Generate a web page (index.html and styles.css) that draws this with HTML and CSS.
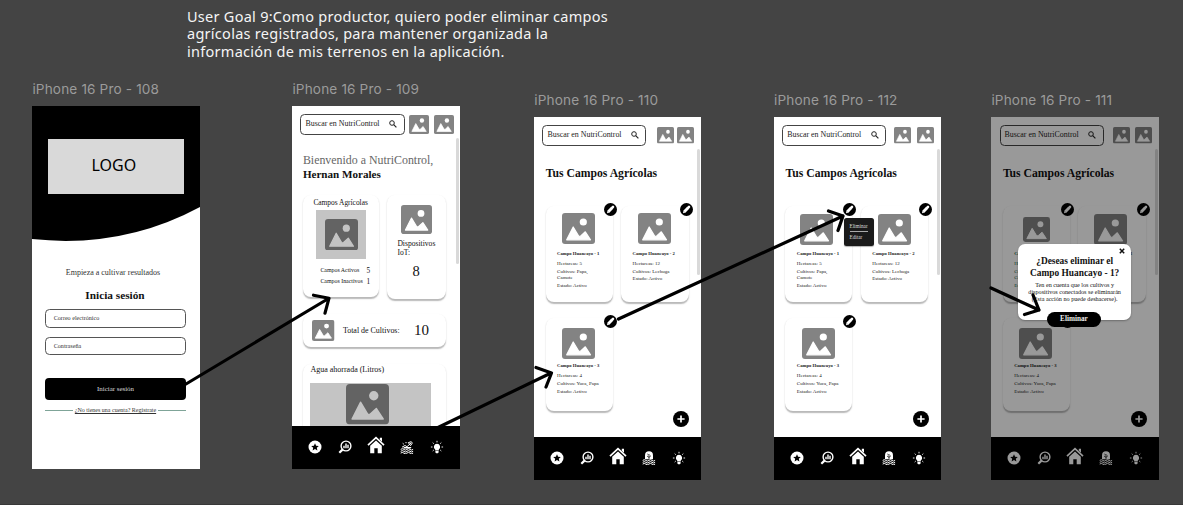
FILE: index.html
```html
<!DOCTYPE html>
<html lang="es">
<head>
<meta charset="utf-8">
<title>User Goal 9</title>
<link rel="stylesheet" href="styles.css">
</head>
<body>
<svg class="sprite" aria-hidden="true">
  <symbol id="pic" viewBox="0 0 33 31" preserveAspectRatio="none">
    <rect width="33" height="31" rx="3" fill="currentColor"/>
    <circle class="cut" cx="21.3" cy="9" r="3.6"/>
    <path class="cut cut-line" d="M4.7 26.8 11.2 14l5.6 9.4 1.7-.2 4.8-4.4 5.2 8z"/>
  </symbol>
  <symbol id="search" viewBox="0 0 8 8">
    <circle cx="3" cy="3" r="2.3" fill="none" stroke="#222" stroke-width="1"/>
    <path d="M4.7 4.7 7.4 7.4" stroke="#222" stroke-width="1.2"/>
  </symbol>
  <symbol id="star" viewBox="0 0 14 14">
    <circle cx="7" cy="7" r="6.5" fill="#fff"/>
    <path d="m7 3.3 1.1 2.4 2.7.3-2 1.8.6 2.7L7 9.1l-2.4 1.4.6-2.7-2-1.8 2.7-.3z" fill="#000"/>
  </symbol>
  <symbol id="stats" viewBox="0 0 14 14">
    <circle cx="8" cy="6" r="4.9" fill="none" stroke="#fff" stroke-width="1.4"/>
    <path d="M4.5 9.6 1.3 12.7" stroke="#fff" stroke-width="2.2"/>
    <path d="M6 8.2V5.7M8 8.2V3.5M10 8.2V4.7" stroke="#fff" stroke-width="1.4"/>
  </symbol>
  <symbol id="home" viewBox="0 0 18 18">
    <path d="M1 9.2 9 1.6l8 7.6" fill="none" stroke="#fff" stroke-width="1.7"/>
    <path d="M12.8 1.8H15v4l-2.200-2zM3.200 9.800 9 4.600l5.800 5.200v7.400h-4.100v-5H7.300v5H3.200z" fill="#fff"/>
  </symbol>
  <symbol id="crop" viewBox="0 0 14 14">
    <path d="M2 7.2 5 5.5l2 1.2L11 3M8.3 2.6l3-.9 1 1.4-1.8 2.6zM2.7 3.3l1.2 1M6 2v1.2" fill="none" stroke="#fff" stroke-width="1"/>
    <path d="M4 6.9h7.5l-1 1.6H3z" fill="#fff"/>
    <path d="M.7 9.4q1.6-1.4 3.1 0t3.1 0 3.1 0 3.1 0M.7 11.3q1.6-1.4 3.1 0t3.1 0 3.1 0 3.1 0M.7 13.1q1.6-1.4 3.1 0t3.1 0 3.1 0 3.1 0" fill="none" stroke="#fff" stroke-width="1"/>
  </symbol>
  <symbol id="field" viewBox="0 0 14 14">
    <path d="M3 8.300V4.200a4 4 0 0 1 8 0v4.100z" fill="#fff"/>
    <path d="M7 8V3M5 5l2 1.4L9 4.6M5.3 3l1.2.6" fill="none" stroke="#000" stroke-width=".7"/>
    <path d="M.7 9.4q1.6-1.4 3.1 0t3.1 0 3.1 0 3.1 0M.7 11.3q1.6-1.4 3.1 0t3.1 0 3.1 0 3.1 0M.7 13.1q1.6-1.4 3.1 0t3.1 0 3.1 0 3.1 0" fill="none" stroke="#fff" stroke-width="1"/>
  </symbol>
  <symbol id="bulb" viewBox="0 0 14 14">
    <path d="M7 3.700a3.200 3.200 0 0 1 1.800 5.800v1H5.200v-1A3.200 3.200 0 0 1 7 3.700zM5.400 11h3.200v1.400l-.8.8H6.200l-.8-.8z" fill="#fff"/>
    <path d="M7 .8v1.6M2.7 2.6l1.1 1.1M11.3 2.6l-1.1 1.1M.9 7h1.6M13.1 7h-1.6M2.7 11l1.1-1M11.3 11l-1.1-1" stroke="#fff" stroke-width=".9"/>
  </symbol>
  <symbol id="edit" viewBox="0 0 13 13">
    <circle cx="6.5" cy="6.5" r="6.5" fill="#000"/>
    <path d="m4.3 8.8 3.9-4.1" stroke="#fff" stroke-width="2.9"/>
    <path d="m3 10.2.5-2.4 1.9 1.8z" fill="#fff"/>
    <path d="m8.3 4.6.7-.7" stroke="#fff" stroke-width="2.6" stroke-linecap="round"/>
  </symbol>
  <symbol id="plus" viewBox="0 0 16 16">
    <circle cx="8" cy="8" r="8" fill="#000"/>
    <path d="M8 4.4v7.2M4.4 8h7.2" stroke="#fff" stroke-width="1.7"/>
  </symbol>
</svg>

<main class="canvas">
  <p class="goal">User Goal 9:Como productor, quiero poder eliminar campos<br>agrícolas registrados, para mantener organizada la<br>información de mis terrenos en la aplicación.</p>

  <section class="board board-108">
    <h2 class="label">iPhone 16 Pro - 108</h2>
    <div class="phone login">
      <header class="hero">
        <svg class="hero-shape" viewBox="0 0 167 135" preserveAspectRatio="none"><path d="M0 0H167V101Q90 143 0 133z"/></svg>
        <div class="logo">LOGO</div>
      </header>
      <p class="tagline">Empieza a cultivar resultados</p>
      <h3 class="login-title">Inicia sesión</h3>
      <div class="input">Correo electrónico</div>
      <div class="input">Contraseña</div>
      <div class="submit">Iniciar sesión</div>
      <div class="signup"><i></i><a>¿No tienes una cuenta? Regístrate</a><i></i></div>
    </div>
  </section>

  <section class="board board-109">
    <h2 class="label">iPhone 16 Pro - 109</h2>
    <div class="phone">
      <header class="topbar">
        <div class="search"><span>Buscar en NutriControl</span><svg><use href="#search"/></svg></div>
        <svg class="avatar"><use href="#pic"/></svg><svg class="avatar"><use href="#pic"/></svg>
      </header>
      <div class="home">
        <p class="welcome">Bienvenido a NutriControl,</p>
        <p class="name">Hernan Morales</p>
        <div class="panels">
          <article class="card fields">
            <h4>Campos Agrícolas</h4>
            <div class="thumb"><svg><use href="#pic"/></svg></div>
            <dl><dt>Campos Activos</dt><dd>5</dd><dt>Campos Inactivos</dt><dd>1</dd></dl>
          </article>
          <article class="card devices">
            <svg><use href="#pic"/></svg>
            <p>Dispositivos<br>IoT:</p>
            <strong>8</strong>
          </article>
          <article class="card total">
            <svg><use href="#pic"/></svg><p>Total de Cultivos:</p><strong>10</strong>
          </article>
          <article class="card water">
            <p>Agua ahorrada (Litros)</p>
            <div class="thumb"><svg><use href="#pic"/></svg></div>
          </article>
        </div>
      </div>
      <span class="scroll"></span>
      <nav class="nav"><svg><use href="#star"/></svg><svg><use href="#stats"/></svg><svg class="big"><use href="#home"/></svg><svg><use href="#crop"/></svg><svg><use href="#bulb"/></svg></nav>
    </div>
  </section>

  <section class="board board-110">
    <h2 class="label">iPhone 16 Pro - 110</h2>
    <div class="phone">
      <header class="topbar">
        <div class="search"><span>Buscar en NutriControl</span><svg><use href="#search"/></svg></div>
        <svg class="avatar"><use href="#pic"/></svg><svg class="avatar"><use href="#pic"/></svg>
      </header>
      <h3 class="title">Tus Campos Agrícolas</h3>
      <div class="plots">
        <article class="card plot one"><div class="pic"><svg><use href="#pic"/></svg></div><h4>Campo Huancayo - 1</h4><p>Hectareas: 5</p><p>Cultivos: Papa,<br>Camote</p><p class="state">Estado: Activo</p><svg class="edit"><use href="#edit"/></svg></article>
        <article class="card plot two"><div class="pic"><svg><use href="#pic"/></svg></div><h4>Campo Huancayo - 2</h4><p>Hectareas: 12</p><p>Cultivos: Lechuga</p><p>Estado: Activo</p><svg class="edit"><use href="#edit"/></svg></article>
        <article class="card plot three"><div class="pic"><svg><use href="#pic"/></svg></div><h4>Campo Huancayo - 3</h4><p>Hectareas: 4</p><p>Cultivos: Yuca, Papa</p><p class="state">Estado: Activo</p><svg class="edit"><use href="#edit"/></svg></article>
      </div>
      <svg class="fab"><use href="#plus"/></svg>
      <span class="scroll"></span>
      <nav class="nav"><svg><use href="#star"/></svg><svg><use href="#stats"/></svg><svg class="big"><use href="#home"/></svg><svg><use href="#field"/></svg><svg><use href="#bulb"/></svg></nav>
    </div>
  </section>

  <section class="board board-112">
    <h2 class="label">iPhone 16 Pro - 112</h2>
    <div class="phone">
      <header class="topbar">
        <div class="search"><span>Buscar en NutriControl</span><svg><use href="#search"/></svg></div>
        <svg class="avatar"><use href="#pic"/></svg><svg class="avatar"><use href="#pic"/></svg>
      </header>
      <h3 class="title">Tus Campos Agrícolas</h3>
      <div class="plots">
        <article class="card plot one"><div class="pic"><svg><use href="#pic"/></svg></div><h4>Campo Huancayo - 1</h4><p>Hectareas: 5</p><p>Cultivos: Papa,<br>Camote</p><p class="state">Estado: Activo</p><svg class="edit"><use href="#edit"/></svg></article>
        <article class="card plot two"><div class="pic"><svg><use href="#pic"/></svg></div><h4>Campo Huancayo - 2</h4><p>Hectareas: 12</p><p>Cultivos: Lechuga</p><p>Estado: Activo</p><svg class="edit"><use href="#edit"/></svg></article>
        <article class="card plot three"><div class="pic"><svg><use href="#pic"/></svg></div><h4>Campo Huancayo - 3</h4><p>Hectareas: 4</p><p>Cultivos: Yuca, Papa</p><p class="state">Estado: Activo</p><svg class="edit"><use href="#edit"/></svg></article>
      </div>
      <div class="menu"><span>Eliminar</span><hr><span>Editar</span></div>
      <svg class="fab"><use href="#plus"/></svg>
      <span class="scroll"></span>
      <nav class="nav"><svg><use href="#star"/></svg><svg><use href="#stats"/></svg><svg class="big"><use href="#home"/></svg><svg><use href="#field"/></svg><svg><use href="#bulb"/></svg></nav>
    </div>
  </section>

  <section class="board board-111">
    <h2 class="label">iPhone 16 Pro - 111</h2>
    <div class="phone">
      <header class="topbar">
        <div class="search"><span>Buscar en NutriControl</span><svg><use href="#search"/></svg></div>
        <svg class="avatar"><use href="#pic"/></svg><svg class="avatar"><use href="#pic"/></svg>
      </header>
      <h3 class="title">Tus Campos Agrícolas</h3>
      <div class="plots">
        <article class="card plot one"><div class="pic"><svg><use href="#pic"/></svg></div><h4>Campo Huancayo - 1</h4><p>Hectareas: 5</p><p>Cultivos: Papa,<br>Camote</p><p class="state">Estado: Activo</p><svg class="edit"><use href="#edit"/></svg></article>
        <article class="card plot two"><div class="pic"><svg><use href="#pic"/></svg></div><h4>Campo Huancayo - 2</h4><p>Hectareas: 12</p><p>Cultivos: Lechuga</p><p>Estado: Activo</p><svg class="edit"><use href="#edit"/></svg></article>
        <article class="card plot three"><div class="pic"><svg><use href="#pic"/></svg></div><h4>Campo Huancayo - 3</h4><p>Hectareas: 4</p><p>Cultivos: Yuca, Papa</p><p class="state">Estado: Activo</p><svg class="edit"><use href="#edit"/></svg></article>
      </div>
      <svg class="fab"><use href="#plus"/></svg>
      <span class="scroll"></span>
      <nav class="nav"><svg><use href="#star"/></svg><svg><use href="#stats"/></svg><svg class="big"><use href="#home"/></svg><svg><use href="#field"/></svg><svg><use href="#bulb"/></svg></nav>
      <div class="overlay"></div>
      <div class="modal">
        <svg class="close" viewBox="0 0 6 6"><path d="m.8.8 4.4 4.4M5.2.8.8 5.2"/></svg>
        <h4>¿Deseas eliminar el<br>Campo Huancayo - 1?</h4>
        <p>Ten en cuenta que los cultivos y<br>dispositivos conectados se eliminarán<br>(Esta acción no puede deshacerse).</p>
        <div class="confirm">Eliminar</div>
      </div>
    </div>
  </section>

  <svg class="arrows" viewBox="0 0 1183 505">
    <path d="M186 384 328.5 298.5M313.5 295.2l15.5 3-4 15"/>
    <path d="M438 427.500 551 373M536 367.500l15.500 5.500-5.500 14"/>
    <path d="M618.500 319 843 216M828.500 211l14.500 5-5 14.500"/>
    <path d="M991 288 1039 310M1033 295l6 15-14.500 4.500"/>
  </svg>
</main>
</body>
</html>
```

FILE: styles.css
```css
* { box-sizing: border-box; margin: 0; padding: 0; }
body { width: 1183px; height: 505px; overflow: hidden; background: #444; font-family: "Liberation Serif", serif; }
svg { display: block; flex: none; }
.sprite { position: absolute; width: 0; height: 0; }
.cut { fill: #fff; }
.cut-line { stroke: #fff; stroke-width: 1.2; stroke-linejoin: round; }
.canvas { position: relative; height: 505px; border-bottom: 1px solid #383838; }
.goal { position: absolute; left: 187px; top: 7.500px; white-space: nowrap; font: 14.5px/17.8px "Noto Sans", sans-serif; letter-spacing: .27px; color: #f5f5f5; }

/* artboards on the canvas */
.board { position: absolute; top: 92.3px; width: 167.2px; }
.board-108 { left: 32.4px; top: 81.4px; }
.board-109 { left: 292.4px; top: 81.4px; }
.board-110 { left: 534.3px; }
.board-112 { left: 774px; }
.board-111 { left: 991.4px; }
.label { height: 25px; font: 400 13.6px/16px Inter, sans-serif; letter-spacing: .15px; color: #9b9b9b; white-space: nowrap; }
.phone { position: relative; display: flex; flex-direction: column; height: 362.8px; background: #fff; overflow: hidden; color: #111; white-space: nowrap; }

/* login */
.login { align-items: center; }
.hero { position: relative; width: 100%; height: 135px; padding: 32.5px 0 0 15.5px; }
.hero-shape { position: absolute; left: -1px; top: 0; width: 169px; height: 135px; }
.logo { position: relative; width: 136px; height: 55px; padding-right: 4px; background: #d9d9d9; text-align: center; font: 16px/53px "Noto Sans", sans-serif; color: #000; }
.tagline { margin-top: 27px; margin-right: 6px; font-size: 8px; line-height: 10px; color: #333; }
.login-title { margin: 10px 2px 7px 0; font-size: 11.300px; line-height: 14px; }
.input { width: 140.500px; height: 18.500px; margin: 0 1px 9px 0; padding-left: 7.500px; border: 1px solid #555; border-radius: 4.500px; font-size: 6.100px; line-height: 16.500px; color: #333; }
.submit { width: 140.500px; height: 21.500px; margin: 14px 1px 0 0; border-radius: 4px; background: #000; color: #ddd; text-align: center; font-size: 6.900px; line-height: 21px; }
.signup { display: flex; align-items: center; justify-content: space-between; width: 140.500px; margin: 6px 1px 0 0; font-size: 6px; line-height: 9px; color: #333; }
.signup a { text-decoration: underline; }
.signup i { width: 28px; height: 1px; background: #7fa498; }

/* shared phone parts */
.topbar { display: flex; align-items: center; padding: 7.800px 0 0 8.200px; }
.search { display: flex; align-items: center; justify-content: space-between; width: 104px; height: 20.500px; padding: 0 6.500px 0 4px; border: 1px solid #444; border-radius: 4.500px; font-size: 7.900px; line-height: 10px; color: #222; }
.search svg { width: 8px; height: 8px; }
.avatar { width: 17px; height: 16.500px; margin-left: 11px; color: #838383; }
.avatar + .avatar { margin-left: 3px; }
.board-112 .avatar { margin-left: 8px; }
.board-112 .avatar + .avatar { margin-left: 6px; }
.board-111 .avatar { margin-left: 9.500px; }
.board-111 .avatar + .avatar { margin-left: 5px; }
.board-109 .topbar { padding-left: 7.600px; }
.board-109 .search { width: 105px; padding-left: 4.500px; }
.board-109 .avatar { width: 20px; height: 19px; margin-left: 4px; }
.board-109 .avatar + .avatar { margin-left: 5px; }
.scroll { position: absolute; right: 1px; top: 32px; width: 3px; height: 126px; border-radius: 2px; background: #d9d9d9; }
.nav { position: absolute; left: 0; right: 0; bottom: 0; display: flex; align-items: center; justify-content: space-between; height: 43.500px; padding: 0 15.500px 0 16px; background: #000; }
.nav svg { width: 14px; height: 14px; }
.nav .big { width: 18px; height: 18px; margin: -4px -1px 0; }
.card { position: relative; background: #fff; border-radius: 8px; box-shadow: 0 1.300px 1.300px rgba(0, 0, 0, .28); }

/* home */
.home { padding: 18px 13px 0 10.500px; }
.welcome { font-size: 11.900px; line-height: 14px; color: #666; }
.name { font-size: 11.100px; line-height: 14px; font-weight: bold; }
.panels { display: grid; grid-template-columns: 76px 59.500px; grid-template-rows: 102.500px 32.500px 80px; column-gap: 8px; row-gap: 17px; margin-top: 14px; }
.fields { height: 102.500px; padding-top: 3.500px; }
.fields h4 { margin-left: 10.500px; font-size: 7.400px; line-height: 9px; font-weight: normal; }
.thumb { display: grid; place-items: center; background: #c4c4c4; color: #636363; }
.thumb svg { --hole: #c4c4c4; color: #636363; }
.cut { fill: var(--hole, #fff); }
.cut-line { stroke: var(--hole, #fff); }
.fields .thumb { width: 50.500px; height: 49.500px; margin: 2.500px 0 0 13px; }
.fields .thumb svg { width: 33px; height: 31.500px; }
.fields dl { display: grid; grid-template-columns: 46px 8px; margin: 6px 0 0 17.500px; font-size: 5.900px; line-height: 11px; }
.fields dd { font-size: 7.300px; }
.devices { height: 104px; padding: 10px 0 0 10.500px; color: #111; }
.devices svg { width: 31px; height: 29px; margin-left: 3.500px; color: #838383; }
.devices p { margin-top: 5px; font-size: 7.600px; line-height: 9.300px; }
.devices strong { display: block; margin: 5px 0 0 15px; font: 14.500px/18px "Liberation Serif", serif; }
.total { grid-column: 1 / 3; display: flex; align-items: center; padding-left: 9.500px; }
.total svg { width: 22.500px; height: 21px; color: #838383; }
.total p { width: 71px; margin-left: 8px; font-size: 7.950px; }
.total strong { font: 15px/18px "Liberation Serif", serif; }
.water { grid-column: 1 / 3; padding: 1px 0 0 7.500px; }
.water p { font-size: 8px; line-height: 10px; }
.water .thumb { width: 121px; height: 60px; margin-top: 8px; place-items: start center; padding-top: 1.500px; }
.water .thumb svg { width: 43px; height: 40.500px; margin-right: 6px; }

/* field list */
.title { margin: 20px 0 0 11.500px; font-size: 11.700px; line-height: 15px; color: #111; }
.plots { display: grid; grid-template-columns: 67px 67.500px; grid-template-rows: 96px 93px; column-gap: 8.500px; row-gap: 16px; margin: 25.500px 0 0 11.300px; }
.plot { padding-left: 11.500px; font-size: 5px; line-height: 6px; color: #222; }
.pic { height: 45px; padding: 6.500px 0 0 5px; color: #838383; }
.pic svg { width: 33px; height: 31px; }
.plot h4 { margin-bottom: 4px; font-size: 4.700px; }
.plot p { margin-bottom: 1.500px; }
.plot .state { padding-top: 1.200px; }
.three .pic { padding-top: 10px; }
.board-112 .one .pic { padding: 8px 0 0 3.500px; }
.board-112 .two .pic { padding: 8px 0 0 5.500px; }
.board-111 .one .pic { padding: 11px 0 0 9px; }
.board-111 .one .pic svg { width: 27px; height: 25px; }
.board-111 .two .pic { padding: 8px 0 0 4.500px; }
.board-111 .one h4, .board-111 .one p { color: #0d5a45; }
.edit { position: absolute; right: -4px; top: -3.500px; width: 13px; height: 13px; }
.fab { position: absolute; right: 12px; top: 293.800px; width: 16px; height: 16px; }
.menu { position: absolute; left: 69.500px; top: 100.300px; width: 30px; height: 28.500px; padding: 5.500px 6px; border-radius: 2.500px; background: #1a1a1a; box-shadow: 0 1px 1px rgba(0, 0, 0, .3); color: #ddd; font-size: 5.200px; line-height: 6px; }
.menu span { display: block; }
.menu hr { margin: 2px 0; border: 0; height: 1px; background: #aaa; }
.overlay { position: absolute; inset: 0; background: rgba(0, 0, 0, .4); }
.modal { position: absolute; left: 27px; top: 126.500px; width: 112.500px; height: 76.500px; padding-top: 11px; border-radius: 7px; background: #fff; box-shadow: 0 1px 2px rgba(0, 0, 0, .3); text-align: center; color: #111; }
.modal h4 { font-size: 9.400px; line-height: 12px; }
.modal p { margin-top: 3.500px; font-size: 6.150px; line-height: 7px; }
.close { position: absolute; right: 5.500px; top: 4.500px; width: 6px; height: 6px; stroke: #111; stroke-width: 1.500; }
.confirm { width: 54px; height: 15px; margin: 9px auto 0 28.500px; border-radius: 8px; background: #000; color: #eee; font-size: 7.200px; line-height: 15px; font-weight: bold; }

.arrows { position: absolute; inset: 0; width: 1183px; height: 505px; fill: none; stroke: #000; stroke-width: 3.200; stroke-linecap: round; stroke-linejoin: round; pointer-events: none; }
```
